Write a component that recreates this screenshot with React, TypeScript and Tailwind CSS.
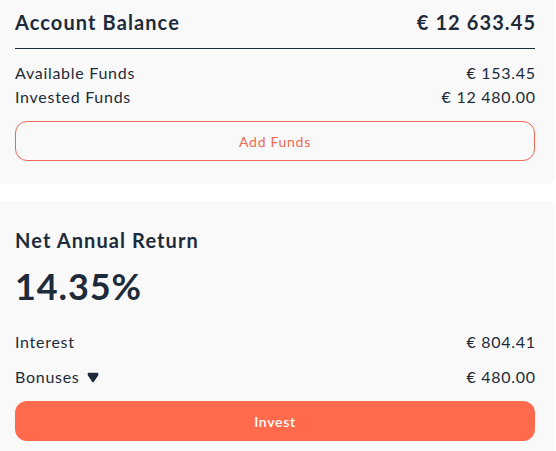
import React from "react";

const font = { fontFamily: "Lato, 'Open Sans', sans-serif" };

export default function App() {
  return (
    <div className="w-[556px] h-[451px] bg-white overflow-hidden text-[#1d2b3a]" style={font}>
      <div className="w-[555px] bg-[#f9f9f9] rounded-br-lg pt-[8px] pb-[23px] pl-[15px] pr-[20px]">
        <div className="flex items-center justify-between h-[28px] text-[20px] font-bold tracking-[0.055em]">
          <span>Account Balance</span>
          <span className="mr-[-0.055em]">€ 12 633.45</span>
        </div>
        <div className="mt-[12px] border-t border-[#1d2b3a]" />
        <div className="mt-[12px] flex justify-between h-[24px] items-center text-[16px] tracking-[0.045em]">
          <span>Available Funds</span>
          <span className="mr-[-0.045em]">€ 153.45</span>
        </div>
        <div className="flex justify-between h-[24px] items-center text-[16px] tracking-[0.045em]">
          <span>Invested Funds</span>
          <span className="mr-[-0.045em]">€ 12 480.00</span>
        </div>
        <button className="mt-[12px] w-full h-[40px] rounded-[12px] border border-[#ec6a55] text-[#ec6a55] text-[14px] tracking-[0.05em] flex items-center justify-center">
          Add Funds
        </button>
      </div>
      <div className="mt-[17px] w-[555px] bg-[#f9f9f9] rounded-tr-lg pt-[25px] pb-[20px] pl-[15px] pr-[20px]">
        <div className="h-[28px] flex items-center text-[20px] font-bold tracking-[0.055em]">Net Annual Return</div>
        <div className="mt-[12px] h-[40px] flex items-center text-[36px] font-bold tracking-[0.025em]">14.35%</div>
        <div className="mt-[24px] flex justify-between h-[24px] items-center text-[16px] tracking-[0.045em]">
          <span>Interest</span>
          <span className="mr-[-0.045em]">€ 804.41</span>
        </div>
        <div className="mt-[11px] flex justify-between h-[24px] items-center text-[16px] tracking-[0.045em]">
          <span className="flex items-center gap-[7px]">
            Bonuses
            <svg width="12" height="11" viewBox="0 0 12 11" className="shrink-0">
              <path
                d="M1.5 1.5 L10.5 1.5 L10.5 3 L6 9.5 L1.5 3 Z"
                fill="#1d2b3a"
                stroke="#1d2b3a"
                strokeWidth="1.6"
                strokeLinejoin="round"
              />
            </svg>
          </span>
          <span className="mr-[-0.045em]">€ 480.00</span>
        </div>
        <button className="mt-[12px] w-full h-[40px] rounded-[12px] bg-[#ff6a4d] text-white text-[14px] font-semibold tracking-[0.05em] flex items-center justify-center">
          Invest
        </button>
      </div>
    </div>
  );
}
